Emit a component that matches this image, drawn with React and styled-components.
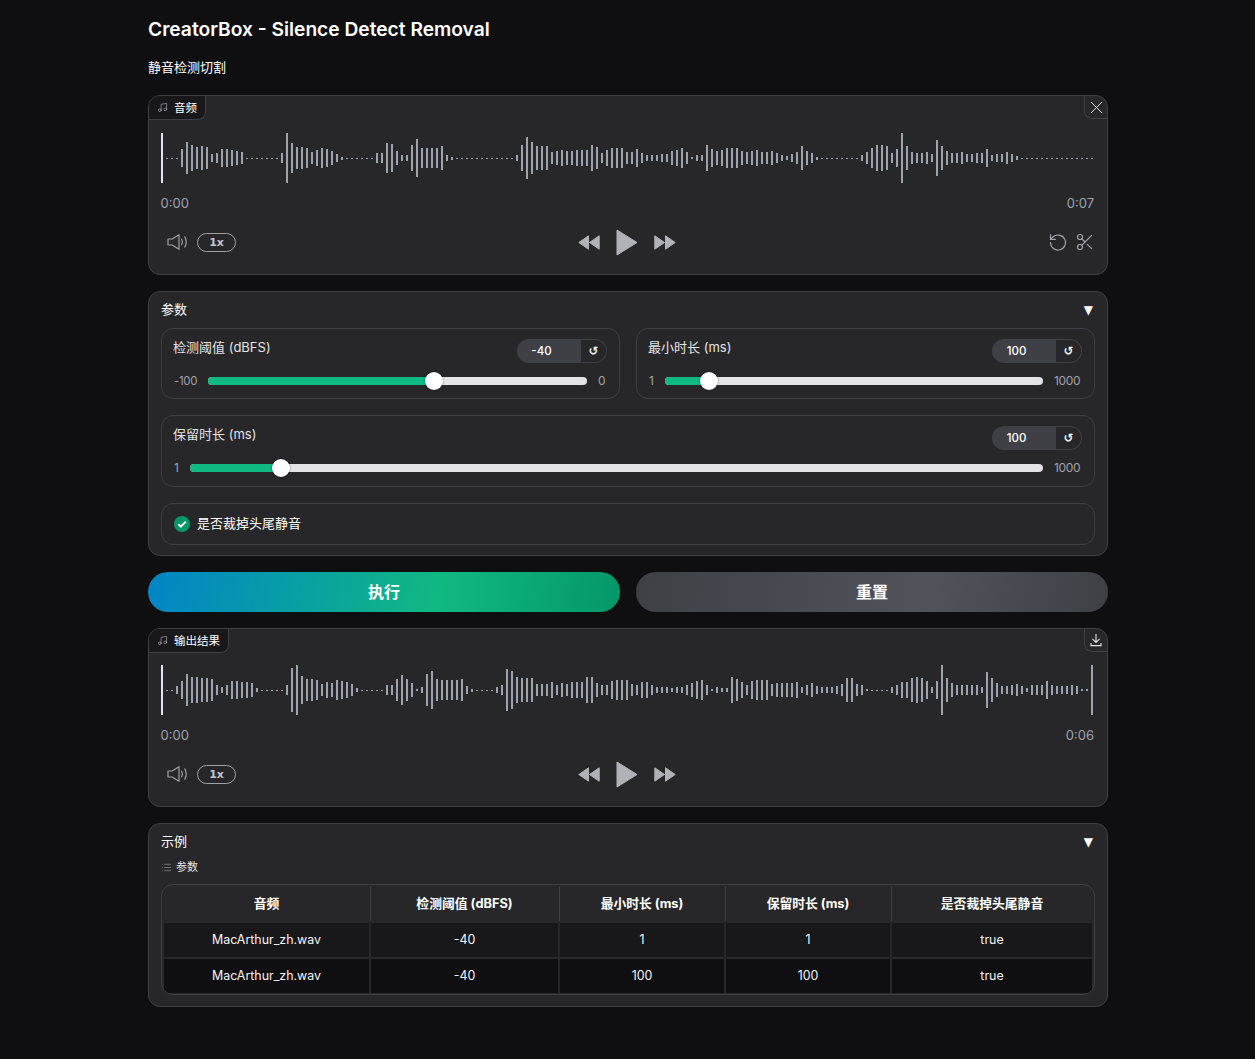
import React from "react";
import styled, { createGlobalStyle } from "styled-components";
import { Music, X, List, Scissors } from "lucide-react";

const Global = createGlobalStyle`
  html, body { margin: 0; padding: 0; background: #0f0f11; }
  body { font-family: Inter, "Noto Sans CJK SC", sans-serif; color: #f4f4f5; }
`;

const SANS = `Inter, "Noto Sans CJK SC", sans-serif`;

const Page = styled.div`
  width: 960px;
  margin-left: 148px;
  padding: 15px 0 52px;
  display: flex;
  flex-direction: column;
`;
const Title = styled.h1`
  margin: 0;
  font: 600 19.2px/28px ${SANS};
  color: #fff;
`;
const Sub = styled.p`
  margin: 14px 0 18px;
  font: 400 13px/20px ${SANS};
  color: #fff;
`;
const Block = styled.section`
  position: relative;
  box-sizing: border-box;
  border: 1px solid #3f3f46;
  border-radius: 12px;
  background: #27272a;
  padding: ${(p) => p.$pad};
  & + & { margin-top: 16px; }
`;
const Tag = styled.div`
  position: absolute;
  left: 0;
  top: 0;
  height: 24px;
  box-sizing: border-box;
  display: flex;
  align-items: center;
  gap: 6px;
  padding: 0 8px;
  background: #18181b;
  border-right: 1px solid #3f3f46;
  border-bottom: 1px solid #3f3f46;
  border-radius: 11px 0 8px 0;
  font: 400 11.5px/16px ${SANS};
  color: #fff;
  svg { color: #a1a1aa; }
`;
const CornerBtn = styled.div`
  position: absolute;
  right: 0;
  top: 0;
  width: 23px;
  height: 23px;
  box-sizing: border-box;
  display: flex;
  align-items: center;
  justify-content: center;
  border-left: 1px solid #3f3f46;
  border-bottom: 1px solid #3f3f46;
  border-radius: 0 11px 0 8px;
  color: #e4e4e7;
`;
const Wave = styled.svg`
  display: block;
  width: 934px;
  height: 50px;
  rect { fill: #9ca3af; }
  rect.head { fill: #e6e1f5; }
`;
const TimeRow = styled.div`
  display: flex;
  justify-content: space-between;
  margin: 12px 1px 0 -0.5px;
  font: 400 13px/16px ${SANS};
  color: #9ca3af;
`;
const Controls = styled.div`
  display: grid;
  grid-template-columns: 1fr auto 1fr;
  align-items: center;
  height: 30px;
  margin-top: 16px;
`;
const LeftCtl = styled.div`
  display: flex;
  align-items: center;
  gap: 9px;
  padding-left: 6px;
  svg { color: #a1a1aa; }
`;
const Speed = styled.div`
  width: 39px;
  height: 19px;
  box-sizing: border-box;
  display: flex;
  align-items: center;
  justify-content: center;
  border: 1px solid #a1a1aa;
  border-radius: 10px;
  font: 700 11px/1 "DejaVu Sans", sans-serif;
  color: #c4c4cc;
`;
const CenterCtl = styled.div`
  display: flex;
  align-items: center;
  gap: 16px;
  margin-right: 2px;
  color: #b1b1b8;
`;
const RightCtl = styled.div`
  display: flex;
  justify-content: flex-end;
  align-items: center;
  gap: 8px;
  color: #a1a1aa;
`;
const PanelHead = styled.div`
  display: flex;
  justify-content: space-between;
  align-items: flex-start;
  height: 20px;
  font: 400 13px/18px ${SANS};
  color: #fff;
`;
const Caret = styled.span`
  font: 400 12px/20px "DejaVu Sans", sans-serif;
  margin-right: 2px;
  color: #fff;
`;
const ParamGrid = styled.div`
  margin-top: 8px;
  display: grid;
  grid-template-columns: 1fr 1fr;
  gap: 16px;
`;
const Card = styled.div`
  box-sizing: border-box;
  grid-column: ${(p) => (p.$wide ? "1 / -1" : "auto")};
  border: 1px solid #3f3f46;
  border-radius: 12px;
  padding: 10px 12px ${(p) => (p.$wide ? "9px" : "8px")} 11px;
`;
const CardHead = styled.div`
  display: flex;
  justify-content: space-between;
  align-items: flex-start;
  height: 24px;
`;
const Label = styled.span`
  font: 400 13px/16px ${SANS};
  color: #e4e4e7;
`;
const NumGroup = styled.div`
  display: flex;
  width: 90px;
  height: 24px;
`;
const NumVal = styled.div`
  box-sizing: border-box;
  width: 64px;
  padding-right: 15px;
  background: #3f3f46;
  border-radius: 12px 0 0 12px;
  text-align: center;
  font: 500 11.5px/24px ${SANS};
  color: #fff;
`;
const NumReset = styled.div`
  box-sizing: border-box;
  width: 26px;
  border: 1px solid #3f3f46;
  border-left: 0;
  border-radius: 0 12px 12px 0;
  text-align: center;
  font: 700 12px/22px "DejaVu Sans", sans-serif;
  color: #f4f4f5;
`;
const SliderRow = styled.div`
  display: flex;
  align-items: center;
  gap: 11px;
  height: 18px;
  margin-top: 9px;
  padding: 0 2px 0 1px;
`;
const Scale = styled.span`
  width: ${(p) => p.$w}px;
  white-space: nowrap;
  font: 400 ${(p) => (p.$w === 23 ? "11.5px" : "12px")}/18px ${SANS};
  letter-spacing: -0.3px;
  color: #a1a1aa;
`;
const Track = styled.div`
  position: relative;
  flex: 1;
  height: 8px;
  border-radius: 4px;
  background: #e4e4e7;
`;
const Fill = styled.div`
  height: 100%;
  border-radius: 4px 0 0 4px;
  background: #10b981;
`;
const Thumb = styled.div`
  position: absolute;
  top: 50%;
  width: 18px;
  height: 18px;
  border-radius: 50%;
  background: #fff;
  box-shadow: 0 0 2px rgba(0, 0, 0, 0.5);
  transform: translate(-50%, -50%);
`;
const CheckCard = styled.div`
  grid-column: 1 / -1;
  box-sizing: border-box;
  height: 42px;
  display: flex;
  align-items: center;
  gap: 7px;
  padding-left: 12px;
  border: 1px solid #3f3f46;
  border-radius: 12px;
  font: 400 13px/20px ${SANS};
  color: #fff;
`;
const CheckText = styled.span`
  padding-bottom: 2px;
`;
const Actions = styled.div`
  display: grid;
  grid-template-columns: 1fr 1fr;
  gap: 16px;
  margin: 16px 0;
`;
const ActionBtn = styled.div`
  height: 40px;
  border-radius: 20px;
  text-align: center;
  font: 700 16px/40px ${SANS};
  color: #fff;
  background: ${(p) =>
    p.$primary
      ? "linear-gradient(100deg, #0284c7 0%, #10b981 62%, #059669 100%)"
      : "linear-gradient(100deg, #3f3f46 0%, #52525b 62%, #3f3f46 100%)"};
`;
const ListRow = styled.div`
  display: flex;
  align-items: center;
  gap: 4px;
  height: 16px;
  margin-top: 7px;
  font: 400 11px/16px ${SANS};
  color: #e4e4e7;
  svg { color: #a1a1aa; }
`;
const TableWrap = styled.div`
  margin-top: 9px;
  box-sizing: border-box;
  border: 1px solid #3f3f46;
  border-radius: 12px;
  padding: 0 1px 1px 2px;
  display: grid;
  grid-template-columns: 205px 187px 164px 164px 200px;
  column-gap: 2px;
  overflow: hidden;
`;
const Head = styled.div`
  position: relative;
  height: 36px;
  margin-bottom: 2px;
  text-align: center;
  font: 700 12.8px/37px ${SANS};
  color: #fff;
  &:not(:nth-child(5))::after {
    content: "";
    position: absolute;
    right: -2px;
    top: 2px;
    bottom: 0;
    width: 1px;
    background: #3f3f46;
  }
`;
const Cell = styled.div`
  height: 34px;
  margin-bottom: ${(p) => (p.$alt ? 0 : "2px")};
  text-align: center;
  font: 400 12.4px/33px ${SANS};
  color: #f4f4f5;
  background: ${(p) => (p.$alt ? "#0f0f11" : "#18181b")};
`;

const z = (n) => Array(n).fill(1);
const WAVE_IN = [
  50, ...z(3), 18, 32, 26, 22, 24, 22, 8, 10, 18, 18, 16, 14, 12, ...z(7),
  10, 50, 30, 22, 22, 20, 12, 16, 20, 18, 14, 8, 3, ...z(6),
  10, 10, 30, 28, 14, 6, 6, 26, 38, 20, 20, 20, 20, 24, 6, 3, ...z(12),
  6, 26, 42, 32, 24, 24, 24, 12, 14, 16, 14, 14, 16, 16, 16, 26, 22, 10, 16, 20, 20, 20, 12, 12, 18,
  10, 6, 6, 6, 8, 8, 14, 16, 20, 12, 2, 6, 6, 26, 18, 14, 16, 20, 20, 20, 14, 12, 14, 16, 12, 12, 14, 10, 6, 4, 8, 12, 24, 14, 10, 3, ...z(8),
  6, 12, 20, 26, 26, 24, 10, 18, 50, 24, 12, 10, 10, 12, 8, 36, 24, 14, 10, 10, 12, 8, 8, 10, 10, 18, 6, 8, 8, 12, 8, 4, ...z(15),
];
const WAVE_OUT = [
  50, ...z(2), 8, 18, 32, 26, 26, 24, 24, 22, 10, 6, 10, 18, 18, 16, 16, 14, 4, ...z(5),
  10, 44, 50, 28, 22, 22, 20, 12, 16, 14, 20, 18, 16, 12, 4, ...z(5),
  10, 10, 22, 30, 22, 14, 2, 6, 32, 38, 22, 20, 20, 20, 20, 22, 8, 3, ...z(4),
  6, 10, 42, 38, 26, 24, 24, 24, 12, 12, 12, 16, 10, 14, 12, 16, 16, 16, 26, 26, 14, 10, 10, 18, 20, 20, 20, 12, 10,
  16, 16, 10, 6, 6, 6, 4, 6, 6, 10, 14, 18, 20, 10, 2, 6, 4, 4, 26, 22, 16, 10, 18, 20, 20, 20, 12, 14, 14, 14, 14, 16, 6, 10, 14, 8, 6, 6, 6, 8, 12, 24, 24, 12, 10, 2, ...z(4),
  6, 10, 16, 16, 24, 26, 24, 18, 6, 18, 50, 24, 14, 10, 10, 10, 10, 10, 6, 36, 24, 14, 8, 8, 10, 12, 8, 4, 10, 10, 10, 18, 10, 8, 8, 8, 10, 8, 2, 2, 50,
];

function Waveform({ data }) {
  return (
    <Wave viewBox="0 0 934 50" shapeRendering="crispEdges" aria-hidden="true">
      {data.map((h, i) => (
        <rect
          key={i}
          className={i === 0 ? "head" : undefined}
          x={i * 5}
          y={h === 1 ? 25 : 25 - h / 2}
          width="2"
          height={h}
        />
      ))}
    </Wave>
  );
}

const VolumeIcon = () => (
  <svg width="21" height="16" viewBox="0 0 21 16" fill="none" stroke="currentColor" strokeWidth="1.2">
    <path d="M1 5h4.2L12 .8v14.4L5.2 11H1z" strokeLinejoin="round" />
    <path d="M14.6 5.2c1 1.8 1 3.8 0 5.6M17.8 2.8c1.8 3.2 1.8 7.2 0 10.4" strokeLinecap="round" />
  </svg>
);
const Rewind = () => (
  <svg width="22" height="15" viewBox="0 0 22 15" fill="currentColor" stroke="currentColor" strokeWidth="1" strokeLinejoin="round">
    <path d="M.8 7.5L10.5.8v13.4zM11.5 7.5L21.2.8v13.4z" />
  </svg>
);
const Forward = () => (
  <svg width="22" height="15" viewBox="0 0 22 15" fill="currentColor" stroke="currentColor" strokeWidth="1" strokeLinejoin="round">
    <path d="M.8.8l9.7 6.7L.8 14.2zM11.5.8l9.7 6.7-9.7 6.7z" />
  </svg>
);
const Play = () => (
  <svg width="22" height="27" viewBox="0 0 22 27" fill="currentColor" stroke="currentColor" strokeWidth="1" strokeLinejoin="round">
    <path d="M1 1l20 12.5L1 26z" />
  </svg>
);
const UndoIcon = () => (
  <svg width="19" height="19" viewBox="0 0 19 19" fill="none" stroke="currentColor" strokeWidth="1.2">
    <path d="M2.5 9.5a7.5 7.5 0 1 0 2.4-5.5L2.5 6.4" strokeLinecap="round" />
    <path d="M2.5 1.6v4.8h4.8" strokeLinecap="round" strokeLinejoin="round" />
  </svg>
);
const DownloadIcon = () => (
  <svg width="12" height="14" viewBox="0 0 12 14" fill="none" stroke="currentColor" strokeWidth="1.1">
    <path d="M6 1v8M2.4 5.8L6 9.4l3.6-3.6M1 10v2.6h10V10" />
  </svg>
);
const CheckIcon = () => (
  <svg width="16" height="16" viewBox="0 0 16 16">
    <circle cx="8" cy="8" r="8" fill="#059669" />
    <path d="M4.4 8.2l2.5 2.4 4.8-5" fill="none" stroke="#fff" strokeWidth="2" />
  </svg>
);

function AudioBlock({ label, end, data, corner, edit, top }) {
  return (
    <Block $pad={`${top}px 12px 17px`}>
      <Tag>
        <Music size={11} strokeWidth={1.5} />
        {label}
      </Tag>
      <CornerBtn>{corner}</CornerBtn>
      <Waveform data={data} />
      <TimeRow>
        <span>0:00</span>
        <span>{end}</span>
      </TimeRow>
      <Controls>
        <LeftCtl>
          <VolumeIcon />
          <Speed>1x</Speed>
        </LeftCtl>
        <CenterCtl>
          <Rewind />
          <Play />
          <Forward />
        </CenterCtl>
        <RightCtl>
          {edit && (
            <>
              <UndoIcon />
              <Scissors size={20} strokeWidth={1.4} />
            </>
          )}
        </RightCtl>
      </Controls>
    </Block>
  );
}

function SliderCard({ label, value, min, max, minW, maxW, pct, wide }) {
  return (
    <Card $wide={wide}>
      <CardHead>
        <Label>{label}</Label>
        <NumGroup>
          <NumVal>{value}</NumVal>
          <NumReset>↺</NumReset>
        </NumGroup>
      </CardHead>
      <SliderRow>
        <Scale $w={minW}>{min}</Scale>
        <Track>
          <Fill style={{ width: `${pct}%` }} />
          <Thumb style={{ left: `${pct}%` }} />
        </Track>
        <Scale $w={maxW}>{max}</Scale>
      </SliderRow>
    </Card>
  );
}

const HEADERS = ["音频", "检测阈值 (dBFS)", "最小时长 (ms)", "保留时长 (ms)", "是否裁掉头尾静音"];
const ROWS = [
  ["MacArthur_zh.wav", "-40", "1", "1", "true"],
  ["MacArthur_zh.wav", "-40", "100", "100", "true"],
];

export default function App() {
  return (
    <>
      <Global />
      <Page>
        <Title>CreatorBox - Silence Detect Removal</Title>
        <Sub>静音检测切割</Sub>
        <AudioBlock
          label="音频"
          end="0:07"
          data={WAVE_IN}
          top={37}
          edit
          corner={<X size={21} strokeWidth={1.1} />}
        />
        <Block $pad="8px 12px 10px">
          <PanelHead>
            <span>参数</span>
            <Caret>▼</Caret>
          </PanelHead>
          <ParamGrid>
            <SliderCard label="检测阈值 (dBFS)" value="-40" min="-100" max="0" minW={23} maxW={7} pct={59.5} />
            <SliderCard label="最小时长 (ms)" value="100" min="1" max="1000" minW={5} maxW={26} pct={11.6} />
            <SliderCard wide label="保留时长 (ms)" value="100" min="1" max="1000" minW={5} maxW={26} pct={10.7} />
            <CheckCard>
              <CheckIcon />
              <CheckText>是否裁掉头尾静音</CheckText>
            </CheckCard>
          </ParamGrid>
        </Block>
        <Actions>
          <ActionBtn $primary>执行</ActionBtn>
          <ActionBtn>重置</ActionBtn>
        </Actions>
        <AudioBlock
          label="输出结果"
          end="0:06"
          data={WAVE_OUT}
          top={36}
          corner={<DownloadIcon />}
        />
        <Block $pad="8px 12px 11px">
          <PanelHead>
            <span>示例</span>
            <Caret>▼</Caret>
          </PanelHead>
          <ListRow>
            <List size={11} strokeWidth={1.3} />
            参数
          </ListRow>
          <TableWrap>
            {HEADERS.map((h) => (
              <Head key={h}>{h}</Head>
            ))}
            {ROWS.map((r, i) =>
              r.map((c, j) => (
                <Cell key={`${i}-${j}`} $alt={i === 1}>
                  {c}
                </Cell>
              ))
            )}
          </TableWrap>
        </Block>
      </Page>
    </>
  );
}
